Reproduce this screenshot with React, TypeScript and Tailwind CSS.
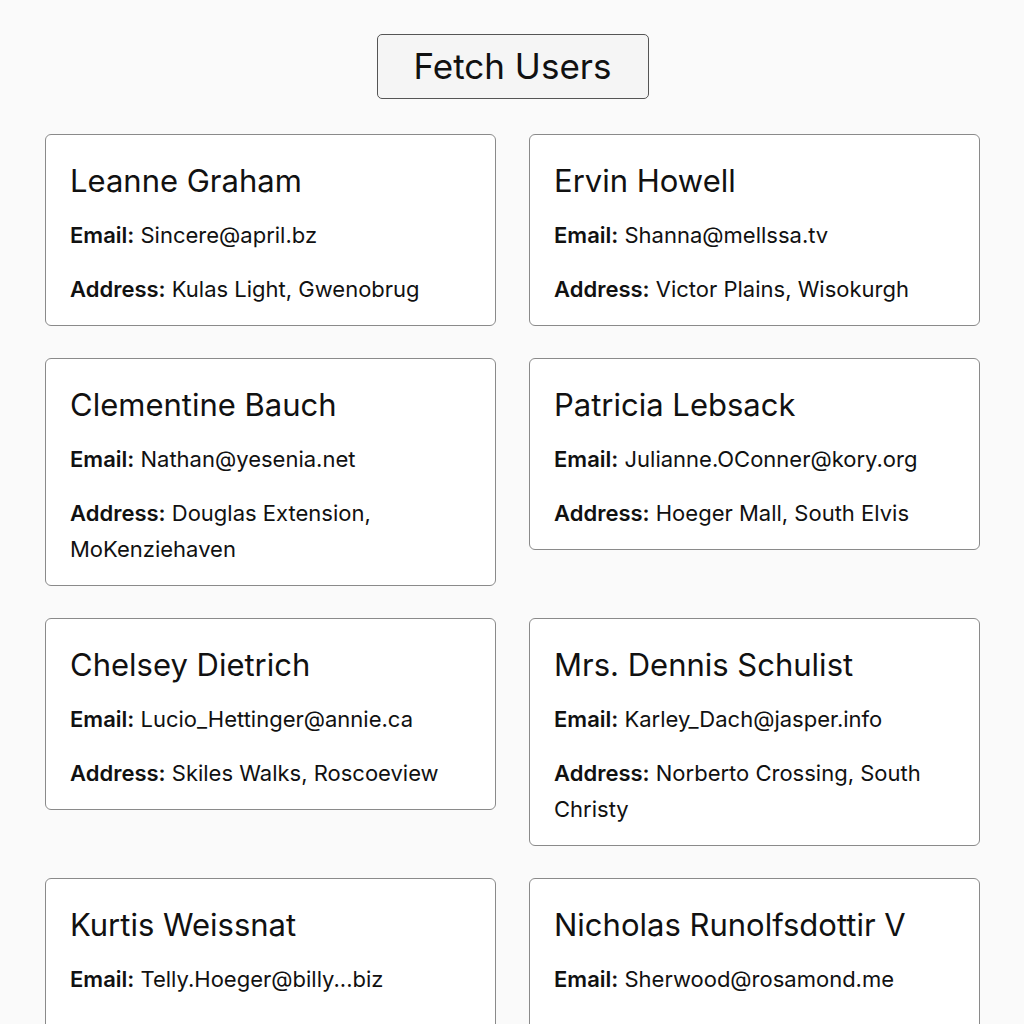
import { useState } from 'react';

type User = {
  id: number;
  name: string;
  email: string;
  street: string;
  city: string;
};

const users: User[] = [
  { id: 1, name: 'Leanne Graham', email: 'Sincere@april.bz', street: 'Kulas Light', city: 'Gwenobrug' },
  { id: 2, name: 'Ervin Howell', email: 'Shanna@mellssa.tv', street: 'Victor Plains', city: 'Wisokurgh' },
  { id: 3, name: 'Clementine Bauch', email: 'Nathan@yesenia.net', street: 'Douglas Extension', city: 'MoKenziehaven' },
  { id: 4, name: 'Patricia Lebsack', email: 'Julianne.OConner@kory.org', street: 'Hoeger Mall', city: 'South Elvis' },
  { id: 5, name: 'Chelsey Dietrich', email: 'Lucio_Hettinger@annie.ca', street: 'Skiles Walks', city: 'Roscoeview' },
  { id: 6, name: 'Mrs. Dennis Schulist', email: 'Karley_Dach@jasper.info', street: 'Norberto Crossing', city: 'South Christy' },
  { id: 7, name: 'Kurtis Weissnat', email: 'Telly.Hoeger@billy...biz', street: 'Rex Trail', city: 'Howemouth' },
  { id: 8, name: 'Nicholas Runolfsdottir V', email: 'Sherwood@rosamond.me', street: 'Ellsworth Summit', city: 'Aliyaview' },
];

const UserCard = ({ user }: { user: User }) => (
  <div className="bg-white border border-[#8a8a8a] rounded-md px-6 pt-7 pb-[18px]">
    <h2 className="text-[31px] leading-[36px] font-normal text-[#111] mb-[18px]">{user.name}</h2>
    <p className="text-[22px] leading-[36px] text-[#111] mb-[18px]">
      <span className="font-semibold">Email:</span> {user.email}
    </p>
    <p className="text-[22px] leading-[36px] text-[#111]">
      <span className="font-semibold">Address:</span> {user.street}, {user.city}
    </p>
  </div>
);

export default function App() {
  const [list, setList] = useState<User[]>(users);

  return (
    <div
      className="min-h-screen bg-[#fafafa] pt-[34px] pl-[45px] pr-[44px] pb-10"
      style={{ fontFamily: 'Inter, Roboto, "Liberation Sans", sans-serif' }}
    >
      <div className="flex justify-center mb-[35px]">
        <button
          onClick={() => setList([...users])}
          className="h-[65px] w-[272px] bg-[#f5f5f5] border border-[#555] rounded-[5px] text-[35px] text-[#111]"
        >
          Fetch Users
        </button>
      </div>

      <div className="grid grid-cols-2 gap-y-8 gap-x-[33px] items-start">
        {list.map((user) => (
          <UserCard key={user.id} user={user} />
        ))}
      </div>
    </div>
  );
}
